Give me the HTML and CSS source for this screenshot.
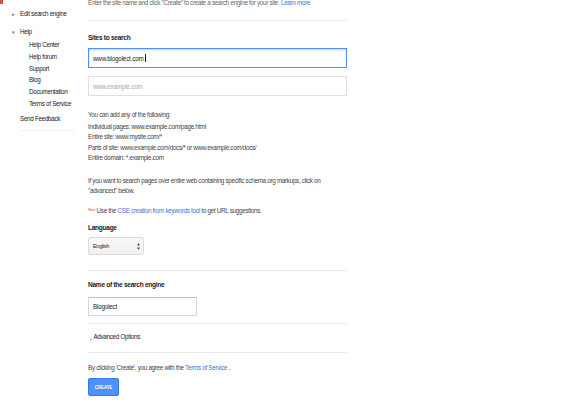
FILE: index.html
```html
<!DOCTYPE html>
<html>
<head>
<meta charset="utf-8">
<link rel="stylesheet" href="styles.css">
</head>
<body>
<div class="page">
  <nav class="sidebar">
    <div class="corner"></div>
    <div class="nav-item"><span class="arrow">&#9656;</span>Edit search engine</div>
    <div class="nav-item nav-help"><span class="arrow">&#9662;</span>Help</div>
    <ul class="sub-list">
      <li>Help Center</li>
      <li>Help forum</li>
      <li>Support</li>
      <li>Blog</li>
      <li>Documentation</li>
      <li>Terms of Service</li>
    </ul>
    <div class="nav-item feedback">Send Feedback</div>
  </nav>
  <main class="main">
    <p class="intro">Enter the site name and click "Create" to create a search engine for your site. <a class="link">Learn more</a></p>
    <section class="section sites">
      <h3 class="label">Sites to search</h3>
      <div class="input focused">www.blogolect.com<span class="caret"></span></div>
      <div class="input placeholder">www.example.com</div>
      <p class="text add-title">You can add any of the following:</p>
      <p class="text list">Individual pages: www.example.com/page.html<br>Entire site: www.mysite.com/*<br>Parts of site: www.example.com/docs/* or www.example.com/docs/<br>Entire domain: *.example.com</p>
      <p class="text schema">If you want to search pages over entire web containing specific schema.org markups, click on<br>"advanced" below.</p>
      <p class="text new-line"><sup class="new">New</sup> Use the <a class="link">CSE creation from keywords tool</a> to get URL suggestions.</p>
      <h3 class="label lang-label">Language</h3>
      <div class="select"><span class="select-value">English</span><svg class="updown" width="3" height="7" viewBox="0 0 3 7"><path d="M1.5 0 L3 2.5 L0 2.5 Z M0 4.5 L3 4.5 L1.5 7 Z" fill="#555"/></svg></div>
    </section>
    <section class="section name">
      <h3 class="label">Name of the search engine</h3>
      <div class="input short">Blogolect</div>
    </section>
    <section class="section advanced">
      <div class="adv"><span class="adv-arrow">&#8250;</span>Advanced Options</div>
    </section>
    <p class="text agree">By clicking 'Create', you agree with the <a class="link">Terms of Service</a> .</p>
    <button class="create">CREATE</button>
  </main>
</div>
</body>
</html>
```
FILE: styles.css
```css
html, body {
  margin: 0;
  padding: 0;
  background: #fff;
}
body {
  font-family: "Liberation Sans", Arial, sans-serif;
  font-size: 6.3px;
  letter-spacing: -0.3px;
  color: #444;
  overflow: hidden;
  height: 400px;
  white-space: nowrap;
}
.page {
  display: flex;
  align-items: flex-start;
}
.sidebar {
  width: 88px;
  flex: none;
  color: #222;
}
.corner {
  width: 3px;
  height: 4px;
  background: #dd4b39;
  margin-bottom: 4px;
}
.nav-item {
  line-height: 12px;
  padding-left: 20px;
  position: relative;
}
.arrow {
  position: absolute;
  left: 12px;
  top: 0;
  font-size: 5px;
  color: #666;
}
.nav-help {
  margin-top: 6px;
}
.sub-list {
  list-style: none;
  margin: 1px 0 0;
  padding: 0 0 0 29px;
}
.sub-list li {
  line-height: 11.75px;
}
.feedback {
  margin-top: 3px;
  padding-bottom: 5px;
  border-bottom: 1px solid #f0f0f0;
  width: 55px;
  margin-left: 20px;
  padding-left: 0;
}
.main {
  width: 259px;
  flex: none;
}
p, h3 {
  margin: 0;
}
.intro {
  line-height: 8px;
  margin-top: -1px;
  padding-bottom: 13px;
  border-bottom: 1px solid #ebebeb;
  color: #666;
}
.link {
  color: #4272db;
}
.label {
  font-size: 6.6px;
  font-weight: bold;
  color: #222;
  line-height: 8px;
}
.sites .label:first-child {
  margin-top: 13px;
}
.input {
  box-sizing: border-box;
  height: 20px;
  border: 1px solid #d9d9d9;
  border-top-color: #c0c0c0;
  padding-left: 4px;
  display: flex;
  align-items: center;
  color: #222;
  letter-spacing: -0.2px;
}
.focused {
  margin-top: 6px;
  border: 1px solid #4d90fe;
  box-shadow: inset 0 1px 2px rgba(0,0,0,0.2);
}
.caret {
  width: 1px;
  height: 8px;
  background: #222;
  margin-left: 1px;
}
.placeholder {
  margin-top: 8px;
  color: #aaa;
  border-color: #e0e0e0;
}
.text {
  line-height: 10.5px;
}
.add-title {
  margin-top: 13.75px;
}
.list {
  margin-top: 1.5px;
}
.schema {
  margin-top: 12px;
}
.new-line {
  margin-top: 9.25px;
}
.new {
  color: #dd4b39;
  font-size: 4px;
  vertical-align: 2px;
  line-height: 0;
}
.lang-label {
  margin-top: 7.75px;
}
.select {
  box-sizing: border-box;
  margin-top: 5px;
  width: 56px;
  height: 18px;
  border: 1px solid #dcdcdc;
  border-radius: 2px;
  background: linear-gradient(#f8f8f8, #f1f1f1);
  display: flex;
  align-items: center;
  justify-content: space-between;
  padding: 0 3px 0 4px;
  font-size: 5.5px;
  color: #222;
}
.updown {
  display: block;
}
.section {
  border-bottom: 1px solid #ebebeb;
}
.sites {
  padding-bottom: 15px;
}
.name .label {
  margin-top: 10px;
}
.short {
  width: 109px;
  height: 19px;
  margin-top: 8px;
}
.name {
  padding-bottom: 7px;
}
.adv {
  margin-top: 9px;
  line-height: 8px;
  color: #222;
  padding-left: 2px;
}
.adv-arrow {
  font-size: 5px;
  margin-right: 2px;
  vertical-align: -2px;
}
.advanced {
  padding-bottom: 9px;
}
.agree {
  margin-top: 11px;
  line-height: 8px;
  color: #444;
}
.create {
  display: block;
  margin-top: 6px;
  width: 31px;
  height: 18px;
  padding: 0;
  background: #4d90fe;
  border: 1px solid #3079ed;
  border-radius: 2px;
  color: #fff;
  font-family: "Liberation Sans", Arial, sans-serif;
  font-size: 4.5px;
  letter-spacing: -0.1px;
  font-weight: bold;
}
```
